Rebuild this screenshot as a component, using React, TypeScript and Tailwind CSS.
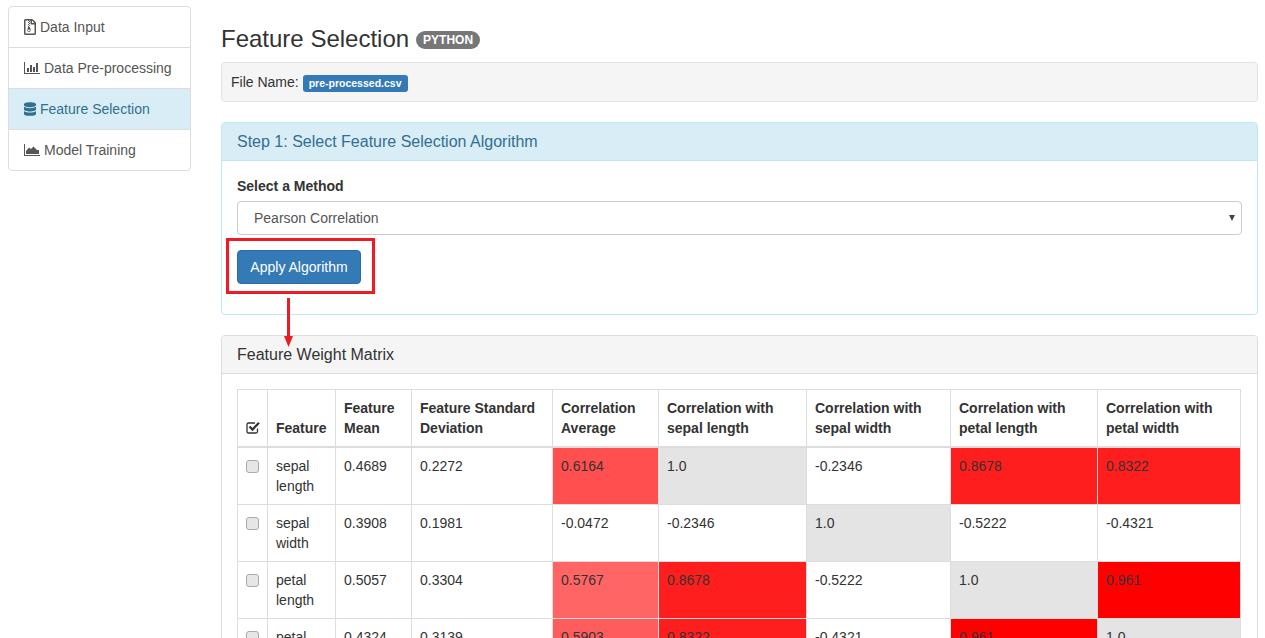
import { FaDatabase, FaRegFileArchive } from "react-icons/fa";

const heatCell: Record<string, string> = {
  "0.6164": "bg-[#ff4f4f]",
  "0.5767": "bg-[#ff6565]",
  "0.5903": "bg-[#ff5d5d]",
  "0.8678": "bg-[#ff1e1e]",
  "0.8322": "bg-[#ff1e1e]",
  "0.961": "bg-[#ff0000]",
  "1.0": "bg-[#e4e4e4]",
};

const rows = [
  ["sepal length", "0.4689", "0.2272", "0.6164", "1.0", "-0.2346", "0.8678", "0.8322"],
  ["sepal width", "0.3908", "0.1981", "-0.0472", "-0.2346", "1.0", "-0.5222", "-0.4321"],
  ["petal length", "0.5057", "0.3304", "0.5767", "0.8678", "-0.5222", "1.0", "0.961"],
  ["petal width", "0.4324", "0.3139", "0.5903", "0.8322", "-0.4321", "0.961", "1.0"],
];

const headers = [
  "Feature",
  "Feature Mean",
  "Feature Standard Deviation",
  "Correlation Average",
  "Correlation with sepal length",
  "Correlation with sepal width",
  "Correlation with petal length",
  "Correlation with petal width",
];

function BarChartIcon() {
  return (
    <svg className="mr-[4px] inline-block align-[-1px]" width="16" height="12" viewBox="0 0 16 12" fill="currentColor">
      <path d="M0 0H1V11H16V12H0Z" />
      <path d="M3 6H5V10H3ZM6 3H8V10H6ZM9 5H11V10H9ZM12 1H14V10H12Z" />
    </svg>
  );
}

function AreaChartIcon() {
  return (
    <svg className="mr-[4px] inline-block align-[-1px]" width="16" height="12" viewBox="0 0 16 12" fill="currentColor">
      <path d="M0 0H1V11H16V12H0Z" />
      <path d="M2 10V7L5 3.5L7 5L9.5 2.5L13 6L15 6V10Z" />
    </svg>
  );
}

function Sidebar() {
  return (
    <div className="mt-[6px] ml-[8px] w-[183px] shrink-0">
      <div className="h-[42px] rounded-t-[4px] border border-[#ddd] bg-white px-[15px] py-[10px] text-[#555]">
        <FaRegFileArchive className="mr-[4px] inline-block h-[16px] w-[12px] align-[-3px]" />
        Data Input
      </div>
      <div className="-mt-px h-[42px] border border-[#ddd] bg-white px-[15px] py-[10px] text-[#555]">
        <BarChartIcon />
        Data Pre-processing
      </div>
      <div className="-mt-px h-[42px] border border-[#ddd] bg-[#d9edf7] px-[15px] py-[10px] text-[#31708f]">
        <FaDatabase className="mr-[4px] inline-block h-[14px] w-[12px] align-[-2px]" />
        Feature Selection
      </div>
      <div className="-mt-px h-[42px] rounded-b-[4px] border border-[#ddd] bg-white px-[15px] py-[10px] text-[#555]">
        <AreaChartIcon />
        Model Training
      </div>
    </div>
  );
}

export default function App() {
  return (
    <div className="flex h-[638px] overflow-hidden bg-white font-['Liberation_Sans',sans-serif] text-[14px] leading-[20px] text-[#333]">
      <Sidebar />
      <main className="ml-[30px] w-[1037px] shrink-0 pt-[26px]">
        <h3 className="mb-[10px] flex h-[26px] items-center text-[24px] leading-[26px]">
          Feature Selection
          <span className="mt-[2px] ml-[7px] rounded-[10px] bg-[#777] px-[7px] py-[3px] text-[12px] leading-[12px] font-bold text-white">
            PYTHON
          </span>
        </h3>

        <div className="mb-[20px] flex h-[40px] items-center rounded-[4px] border border-[#e3e3e3] bg-[#f5f5f5] px-[9px]">
          File Name:
          <span className="mt-[2px] ml-[4px] rounded-[3px] bg-[#337ab7] px-[6px] py-[2px] text-[10.5px] leading-[13px] font-bold text-white">
            pre-processed.csv
          </span>
        </div>

        <section className="relative mb-[20px] h-[193px] rounded-[4px] border border-[#bce8f1] bg-white">
          <div className="h-[38px] rounded-t-[3px] border-b border-[#bce8f1] bg-[#d9edf7] px-[15px] pt-[10px] text-[16px] leading-[18px] text-[#31708f]">
            Step 1: Select Feature Selection Algorithm
          </div>
          <div className="px-[15px] pt-[15px]">
            <label className="mb-[5px] block font-bold">Select a Method</label>
            <div className="relative">
              <select className="block h-[34px] w-[1005px] appearance-none rounded-[4px] border border-[#ccc] bg-white pl-[16px] text-[14px] text-[#555]">
                <option>Pearson Correlation</option>
              </select>
              <svg className="pointer-events-none absolute top-[14px] left-[992px]" width="6" height="6" viewBox="0 0 6 6">
                <path d="M0 0H6L3 6Z" fill="#444" />
              </svg>
            </div>
            <button className="mt-[15px] h-[34px] w-[124px] rounded-[4px] border border-[#2e6da4] bg-[#337ab7] text-center text-white">
              Apply Algorithm
            </button>
          </div>

          {/* annotation drawn over the page */}
          <div className="absolute top-[115px] left-[4px] h-[56px] w-[149px] border-[3px] border-[#ed1c24]" />
          <svg className="absolute top-[175px] left-[60px]" width="14" height="50" viewBox="0 0 14 50">
            <path d="M6.5 0V39" stroke="#ed1c24" strokeWidth="3" fill="none" />
            <path d="M2 38H11L6.5 49Z" fill="#ed1c24" />
          </svg>
        </section>

        <section className="rounded-[4px] border border-[#ddd] bg-white">
          <div className="h-[38px] rounded-t-[3px] border-b border-[#ddd] bg-[#f5f5f5] px-[15px] pt-[10px] text-[16px] leading-[18px] text-[#333]">
            Feature Weight Matrix
          </div>
          <div className="px-[15px] pt-[15px]">
            <table className="w-[1003px] table-fixed border-collapse">
              <colgroup>
                <col className="w-[30px]" />
                <col className="w-[68px]" />
                <col className="w-[76px]" />
                <col className="w-[141px]" />
                <col className="w-[106px]" />
                <col className="w-[148px]" />
                <col className="w-[144px]" />
                <col className="w-[147px]" />
                <col className="w-[143px]" />
              </colgroup>
              <thead>
                <tr>
                  <th className="border border-b-[2px] border-[#ddd] p-[8px] align-bottom">
                    <svg className="mb-[4px] block" width="15" height="13" viewBox="0 0 15 13" fill="none">
                      <path d="M11.5 7.5V10.5Q11.5 12 10 12H2.5Q1 12 1 10.5V3.5Q1 2 2.5 2H9" stroke="#333" strokeWidth="1.3" />
                      <path d="M3.5 5.5L6.5 8.5L13 1.8" stroke="#333" strokeWidth="2.3" />
                    </svg>
                  </th>
                  {headers.map((h) => (
                    <th key={h} className="border border-b-[2px] border-[#ddd] p-[8px] text-left align-bottom font-bold">
                      {h}
                    </th>
                  ))}
                </tr>
              </thead>
              <tbody>
                {rows.map((row) => (
                  <tr key={row[0]}>
                    <td className="border border-[#ddd] p-[8px] align-top">
                      <input
                        type="checkbox"
                        className="mt-[4px] block h-[13px] w-[13px] appearance-none rounded-[3px] border border-[#aaa] bg-[#e6e6e6]"
                      />
                    </td>
                    {row.map((cell, i) => (
                      <td
                        key={i}
                        className={`border border-[#ddd] p-[8px] align-top ${i >= 3 ? heatCell[cell] ?? "" : ""}`}
                      >
                        {cell}
                      </td>
                    ))}
                  </tr>
                ))}
              </tbody>
            </table>
          </div>
        </section>
      </main>
    </div>
  );
}
